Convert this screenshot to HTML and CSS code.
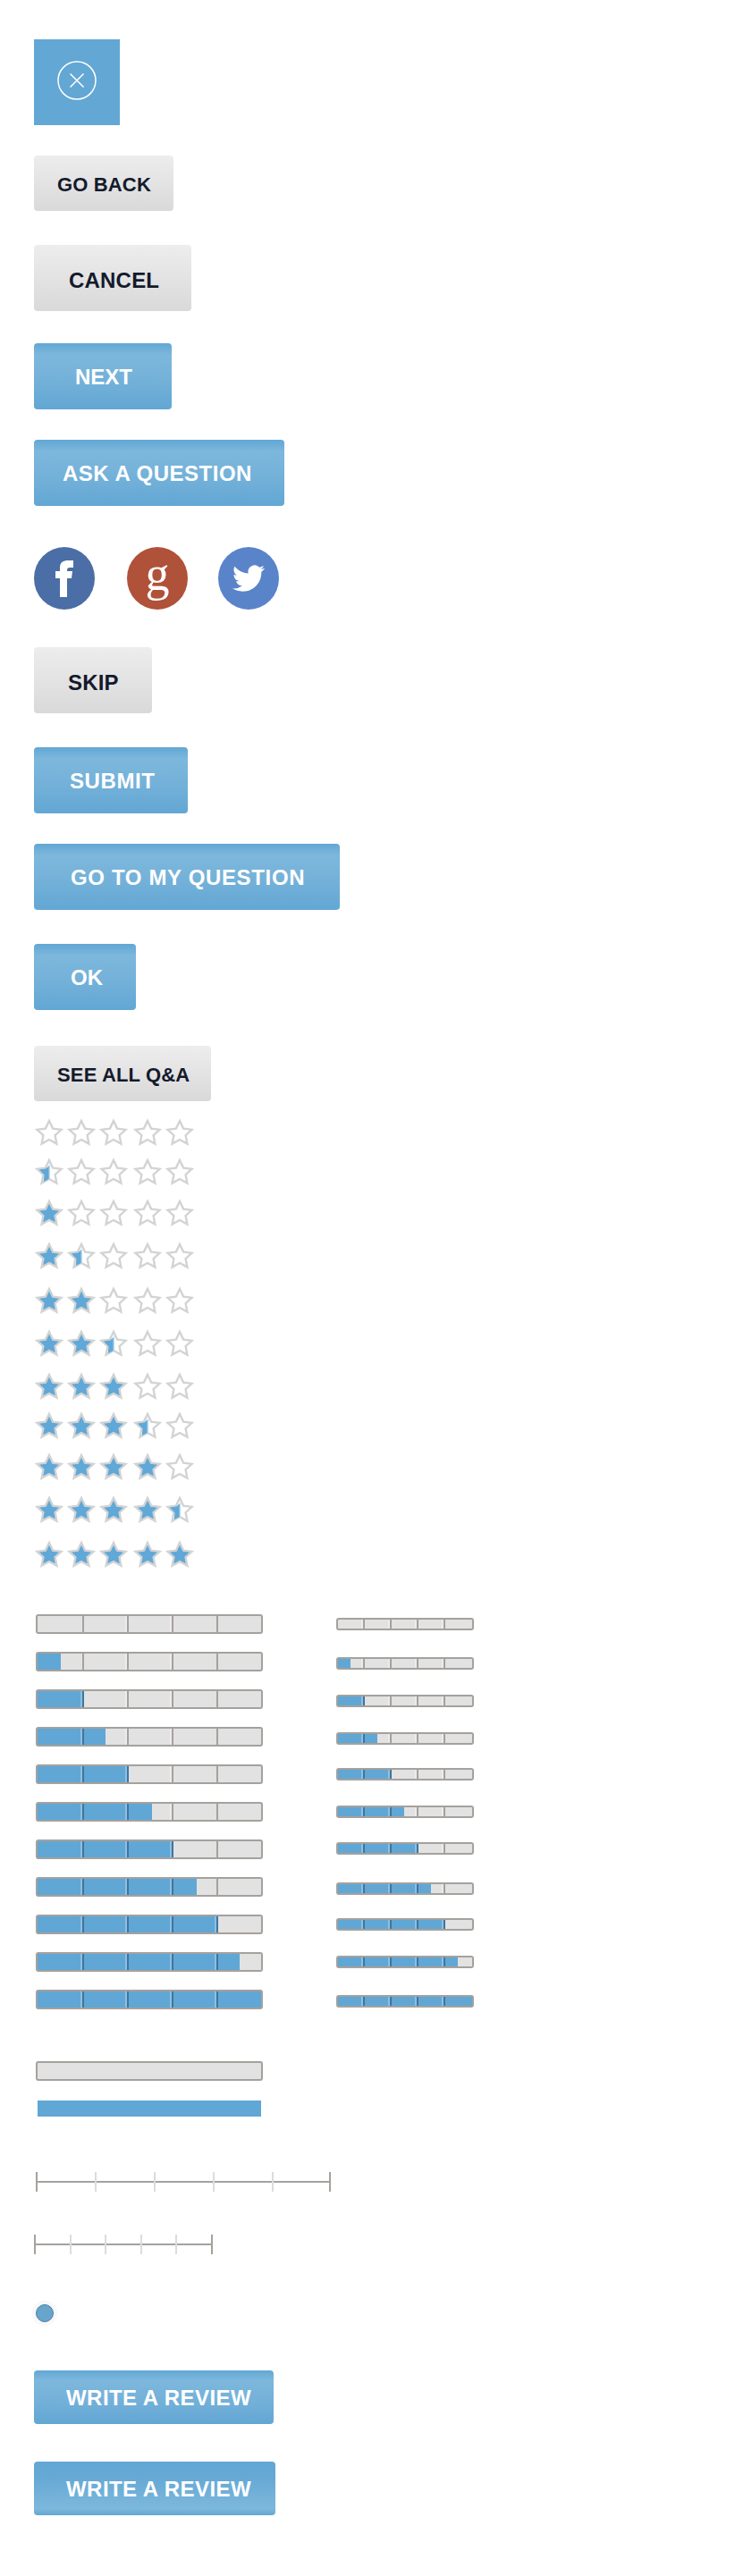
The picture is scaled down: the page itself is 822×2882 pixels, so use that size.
FILE: index.html
```html
<!DOCTYPE html>
<html lang="en">

<head>
    <meta charset="UTF-8">
    <meta name="viewport" content="width=device-width, initial-scale=1.0">
    <title>UI Kit</title>
    <link rel="stylesheet" href="styles.css">
</head>

<body>

    <svg class="defs" width="0" height="0">
        <defs>
            <linearGradient id="halfFill" x1="0" x2="1" y1="0" y2="0">
                <stop offset="0.82" stop-color="#5fa8d8" />
                <stop offset="1" stop-color="#d5e8f4" />
            </linearGradient>
            <polygon id="starShape" points="16,3 20.1,11.6 29.6,12.8 22.6,19.2 24.4,28.6 16,24 7.6,28.6 9.4,19.2 2.4,12.8 11.9,11.6" />
            <symbol id="starEmpty" viewBox="0 0 32 32">
                <use href="#starShape" fill="#fff" stroke="#d2d3d4" stroke-width="2.4" />
            </symbol>
            <symbol id="starFull" viewBox="0 0 32 32">
                <use href="#starShape" fill="#5fa8d8" stroke="#d2d3d4" stroke-width="2.4" />
            </symbol>
            <symbol id="starHalf" viewBox="0 0 32 32">
                <use href="#starShape" fill="#fff" stroke="#d2d3d4" stroke-width="2.4" />
                <polygon points="17,8 17,23.6 16,24 9.8,27 10.4,19.2 4.6,13.4 12.4,12.4" fill="url(#halfFill)" />
            </symbol>
        </defs>
    </svg>

    <div id="kit">
        <div class="close-tile">
            <svg width="44" height="44" viewBox="0 0 44 44">
                <circle cx="22" cy="22" r="21" fill="none" stroke="#fff" stroke-width="1.5" />
                <path d="M14.5 14.5 L29.5 29.5 M29.5 14.5 L14.5 29.5" stroke="#fff" stroke-width="1.5" />
            </svg>
        </div>

        <a class="btn grey small btn-go-back">GO BACK</a>
        <a class="btn grey btn-cancel">CANCEL</a>
        <a class="btn blue btn-next">NEXT</a>
        <a class="btn blue btn-ask">ASK A QUESTION</a>

        <div class="social">
            <span class="round facebook">
                <svg width="68" height="70" viewBox="0 0 68 70">
                    <path fill="#fff" d="M29 56 V35 H24 V27 H29 V23 C29 17 33 15 38 15 H44 V23 H40 C37.5 23 37 24.5 37 26 V27 H43 L42 35 H37 V56 Z" />
                </svg>
            </span>
            <span class="round google">g</span>
            <span class="round twitter">
                <svg width="36" height="36" viewBox="0 0 24 24">
                    <path fill="#fff" d="M23.953 4.57a10 10 0 01-2.825.775 4.958 4.958 0 002.163-2.723c-.951.555-2.005.959-3.127 1.184a4.92 4.92 0 00-8.384 4.482C7.69 8.095 4.067 6.13 1.64 3.162a4.822 4.822 0 00-.666 2.475c0 1.71.87 3.213 2.188 4.096a4.904 4.904 0 01-2.228-.616v.06a4.923 4.923 0 003.946 4.827 4.996 4.996 0 01-2.212.085 4.936 4.936 0 004.604 3.417 9.867 9.867 0 01-6.102 2.105c-.39 0-.779-.023-1.17-.067a13.995 13.995 0 007.557 2.209c9.053 0 13.998-7.496 13.998-13.985 0-.21 0-.42-.015-.63A9.935 9.935 0 0024 4.59z" />
                </svg>
            </span>
        </div>

        <a class="btn grey btn-skip">SKIP</a>
        <a class="btn blue btn-submit">SUBMIT</a>
        <a class="btn blue btn-go-to">GO TO MY QUESTION</a>
        <a class="btn blue btn-ok">OK</a>
        <a class="btn grey small btn-see-all">SEE ALL Q&amp;A</a>

        <div class="ratings">
            <div class="rating"><svg><use href="#starEmpty" /></svg><svg><use href="#starEmpty" /></svg><svg><use href="#starEmpty" /></svg><svg><use href="#starEmpty" /></svg><svg><use href="#starEmpty" /></svg></div>
            <div class="rating"><svg><use href="#starHalf" /></svg><svg><use href="#starEmpty" /></svg><svg><use href="#starEmpty" /></svg><svg><use href="#starEmpty" /></svg><svg><use href="#starEmpty" /></svg></div>
            <div class="rating"><svg><use href="#starFull" /></svg><svg><use href="#starEmpty" /></svg><svg><use href="#starEmpty" /></svg><svg><use href="#starEmpty" /></svg><svg><use href="#starEmpty" /></svg></div>
            <div class="rating"><svg><use href="#starFull" /></svg><svg><use href="#starHalf" /></svg><svg><use href="#starEmpty" /></svg><svg><use href="#starEmpty" /></svg><svg><use href="#starEmpty" /></svg></div>
            <div class="rating"><svg><use href="#starFull" /></svg><svg><use href="#starFull" /></svg><svg><use href="#starEmpty" /></svg><svg><use href="#starEmpty" /></svg><svg><use href="#starEmpty" /></svg></div>
            <div class="rating"><svg><use href="#starFull" /></svg><svg><use href="#starFull" /></svg><svg><use href="#starHalf" /></svg><svg><use href="#starEmpty" /></svg><svg><use href="#starEmpty" /></svg></div>
            <div class="rating"><svg><use href="#starFull" /></svg><svg><use href="#starFull" /></svg><svg><use href="#starFull" /></svg><svg><use href="#starEmpty" /></svg><svg><use href="#starEmpty" /></svg></div>
            <div class="rating"><svg><use href="#starFull" /></svg><svg><use href="#starFull" /></svg><svg><use href="#starFull" /></svg><svg><use href="#starHalf" /></svg><svg><use href="#starEmpty" /></svg></div>
            <div class="rating"><svg><use href="#starFull" /></svg><svg><use href="#starFull" /></svg><svg><use href="#starFull" /></svg><svg><use href="#starFull" /></svg><svg><use href="#starEmpty" /></svg></div>
            <div class="rating"><svg><use href="#starFull" /></svg><svg><use href="#starFull" /></svg><svg><use href="#starFull" /></svg><svg><use href="#starFull" /></svg><svg><use href="#starHalf" /></svg></div>
            <div class="rating"><svg><use href="#starFull" /></svg><svg><use href="#starFull" /></svg><svg><use href="#starFull" /></svg><svg><use href="#starFull" /></svg><svg><use href="#starFull" /></svg></div>
        </div>

        <div class="bar-columns">
            <div class="bars bars-large">
                <div class="bar"><i></i><i></i><i></i><i></i><i></i></div>
                <div class="bar"><i class="half"></i><i></i><i></i><i></i><i></i></div>
                <div class="bar"><i class="on"></i><i></i><i></i><i></i><i></i></div>
                <div class="bar"><i class="on"></i><i class="half"></i><i></i><i></i><i></i></div>
                <div class="bar"><i class="on"></i><i class="on"></i><i></i><i></i><i></i></div>
                <div class="bar"><i class="on"></i><i class="on"></i><i class="half"></i><i></i><i></i></div>
                <div class="bar"><i class="on"></i><i class="on"></i><i class="on"></i><i></i><i></i></div>
                <div class="bar"><i class="on"></i><i class="on"></i><i class="on"></i><i class="half"></i><i></i></div>
                <div class="bar"><i class="on"></i><i class="on"></i><i class="on"></i><i class="on"></i><i></i></div>
                <div class="bar"><i class="on"></i><i class="on"></i><i class="on"></i><i class="on"></i><i class="half"></i></div>
                <div class="bar"><i class="on"></i><i class="on"></i><i class="on"></i><i class="on"></i><i class="on"></i></div>
            </div>
            <div class="bars bars-small">
                <div class="bar"><i></i><i></i><i></i><i></i><i></i></div>
                <div class="bar"><i class="half"></i><i></i><i></i><i></i><i></i></div>
                <div class="bar"><i class="on"></i><i></i><i></i><i></i><i></i></div>
                <div class="bar"><i class="on"></i><i class="half"></i><i></i><i></i><i></i></div>
                <div class="bar"><i class="on"></i><i class="on"></i><i></i><i></i><i></i></div>
                <div class="bar"><i class="on"></i><i class="on"></i><i class="half"></i><i></i><i></i></div>
                <div class="bar"><i class="on"></i><i class="on"></i><i class="on"></i><i></i><i></i></div>
                <div class="bar"><i class="on"></i><i class="on"></i><i class="on"></i><i class="half"></i><i></i></div>
                <div class="bar"><i class="on"></i><i class="on"></i><i class="on"></i><i class="on"></i><i></i></div>
                <div class="bar"><i class="on"></i><i class="on"></i><i class="on"></i><i class="on"></i><i class="half"></i></div>
                <div class="bar"><i class="on"></i><i class="on"></i><i class="on"></i><i class="on"></i><i class="on"></i></div>
            </div>
        </div>

        <div class="track"></div>
        <div class="track-fill"></div>

        <div class="ruler ruler-long"><i></i><i></i><i></i><i></i></div>
        <div class="ruler ruler-short"><i></i><i></i><i></i><i></i></div>

        <div class="handle"></div>

        <a class="btn blue btn-review">WRITE A REVIEW</a>
        <a class="btn blue-flip btn-review-hover">WRITE A REVIEW</a>
    </div>

</body>

</html>
```

FILE: styles.css
```css
body {
    margin: 0;
    background-color: #fff;
    font-family: "Liberation Sans", Arial, sans-serif;
}

.defs {
    position: absolute;
}

#kit {
    display: flex;
    flex-direction: column;
    align-items: flex-start;
    padding: 44px 0 68px 38px;
}

.close-tile {
    width: 96px;
    height: 96px;
    background-color: #63a7d4;
    display: flex;
    justify-content: center;
    align-items: center;
}

.close-tile svg {
    margin-bottom: 4px;
}

/* Buttons */
.btn {
    display: flex;
    align-items: center;
    box-sizing: border-box;
    height: 74px;
    padding-top: 1px;
    border-radius: 4px;
    font-size: 24px;
    font-weight: bold;
    white-space: nowrap;
}

.grey {
    color: #141a2c;
    padding-top: 5px;
    background: linear-gradient(#ededed, #d9d9d9);
}

.btn.small {
    height: 62px;
    padding-top: 3px;
    font-size: 22px;
    letter-spacing: 0.15px;
}

.blue {
    color: #fff;
    background: linear-gradient(#62a7d4 0, #7db7dc 18%, #74b1d9 55%, #62a7d4 100%);
}

.blue-flip {
    color: #fff;
    background: linear-gradient(#62a7d4 0, #66a9d5 30%, #7db7dc 88%, #62a7d4 100%);
}

.btn-go-back { width: 156px; margin-top: 34px; padding-left: 26px; }
.btn-cancel { width: 176px; margin-top: 38px; padding-left: 39px; letter-spacing: 0.2px; }
.btn-next { width: 154px; margin-top: 36px; padding-left: 46px; }
.btn-ask { width: 280px; margin-top: 34px; padding-left: 32px; letter-spacing: 0.5px; }
.btn-skip { width: 132px; margin-top: 42px; padding-left: 38px; letter-spacing: 0.2px; }
.btn-submit { width: 172px; margin-top: 38px; padding-left: 40px; letter-spacing: 0.6px; }
.btn-go-to { width: 342px; margin-top: 34px; padding-left: 41px; letter-spacing: 0.65px; }
.btn-ok { width: 114px; margin-top: 38px; padding-left: 41px; }
.btn-see-all { width: 198px; margin-top: 40px; padding-left: 26px; }
.btn-review { width: 268px; height: 60px; margin-top: 50px; padding-left: 36px; letter-spacing: 0.45px; }
.btn-review-hover { width: 270px; height: 60px; margin-top: 42px; padding-left: 36px; letter-spacing: 0.45px; }

/* Social circles */
.social {
    display: flex;
    margin-top: 46px;
}

.round {
    width: 68px;
    height: 70px;
    border-radius: 50%;
    display: flex;
    justify-content: center;
    align-items: center;
    flex-shrink: 0;
}

.facebook { background-color: #4a6ea5; }

.google {
    background-color: #b05139;
    margin-left: 36px;
    color: #fff;
    font-family: "Liberation Serif", serif;
    font-size: 54px;
    line-height: 54px;
    padding-bottom: 10px;
    box-sizing: border-box;
}

.twitter {
    background-color: #5a84c9;
    margin-left: 34px;
}

/* Star ratings */
.ratings {
    margin-top: 19px;
}

.rating {
    display: flex;
    height: 32px;
    margin-top: 16px;
    margin-left: 1px;
}

.rating svg {
    width: 32px;
    height: 32px;
    margin-right: 4px;
}

.rating svg:nth-child(3) {
    margin-right: 6px;
}

.rating:nth-child(1) { margin-top: 0; }
.rating:nth-child(2) { margin-top: 12px; }
.rating:nth-child(3) { margin-top: 14px; }
.rating:nth-child(5) { margin-top: 18px; }
.rating:nth-child(8) { margin-top: 12px; }
.rating:nth-child(9) { margin-top: 14px; }
.rating:nth-child(11) { margin-top: 18px; }

/* Segmented bars */
.bar-columns {
    display: flex;
    margin-top: 51px;
    margin-left: 2px;
}

.bar {
    display: flex;
    box-sizing: border-box;
    border: 2px solid #a5a19d;
    border-radius: 3px;
    background-color: #e2e2e2;
}

.bar i {
    display: block;
    box-sizing: border-box;
    border-left: 2px solid #a5a19d;
    --cut: 26px;
}

.bar i:first-child {
    border-left: none;
}

.bar i.on {
    background-color: #60a7d5;
    box-shadow: inset -2px 0 #8fbfe0;
}

.bar i.on:last-child {
    box-shadow: none;
}

.bar i.half {
    background: linear-gradient(90deg, #60a7d5 var(--cut), #e2e2e2 var(--cut));
    background-origin: padding-box;
}

.bar i.on + i {
    border-left-color: #3f75a0;
}

.bars-large .bar {
    width: 254px;
    height: 22px;
    margin-bottom: 20px;
}

.bars-large .bar i {
    width: 50px;
}

.bars-large .bar i:nth-child(2):not(.on),
.bars-large .bar i:nth-child(3):not(.on) {
    box-shadow: inset -2px 0 #ececec;
}

.bars-large .bar i:nth-child(2).half,
.bars-large .bar i:nth-child(5).half {
    --cut: 24px;
}

.bars-small {
    margin-left: 82px;
    margin-top: 4px;
}

.bars-small .bar {
    width: 154px;
    height: 14px;
    margin-bottom: 28px;
}

.bars-small .bar i {
    width: 30px;
    --cut: 14px;
}

.bars-small .bar i:first-child {
    width: 28px;
}

.bars-small .bar i:last-child {
    width: 32px;
}

.bars-small .bar i:not(.on):not(:last-child) {
    box-shadow: inset -2px 0 #ececec;
}

.bars-small .bar i.half {
    box-shadow: none;
}

.bars-small .bar:nth-child(1) { margin-bottom: 30px; }
.bars-small .bar:nth-child(4) { margin-bottom: 26px; }
.bars-small .bar:nth-child(6) { margin-bottom: 27px; }
.bars-small .bar:nth-child(7) { margin-bottom: 31px; }
.bars-small .bar:nth-child(8) { margin-bottom: 26px; }
.bars-small .bar:nth-child(10) { margin-bottom: 30px; }

/* Plain track */
.track {
    box-sizing: border-box;
    width: 254px;
    height: 22px;
    margin-top: 32px;
    margin-left: 2px;
    border: 2px solid #a5a19d;
    border-radius: 3px;
    background-color: #e2e2e2;
}

.track-fill {
    width: 250px;
    height: 18px;
    margin-top: 22px;
    margin-left: 4px;
    background-color: #60a7d5;
}

/* Rulers */
.ruler {
    display: flex;
    justify-content: space-between;
    box-sizing: border-box;
    height: 22px;
    border-left: 2px solid #a5a19d;
    border-right: 2px solid #a5a19d;
    background: linear-gradient(#a5a19d, #a5a19d) center / 100% 2px no-repeat;
}

.ruler i {
    display: block;
    width: 2px;
    background-color: #dcdcdc;
}

.ruler-long {
    width: 330px;
    margin-top: 62px;
    margin-left: 2px;
    padding: 0 62px 0 64px;
}

.ruler-short {
    width: 200px;
    margin-top: 48px;
    padding: 0 38px;
}

/* Slider handle */
.handle {
    box-sizing: border-box;
    width: 20px;
    height: 20px;
    margin-top: 56px;
    margin-bottom: 4px;
    margin-left: 2px;
    border: 1px solid #4d7fa6;
    border-radius: 50%;
    background-color: #67a5cb;
    box-shadow: 0 0 0 4px #f8f8f8;
}
```
